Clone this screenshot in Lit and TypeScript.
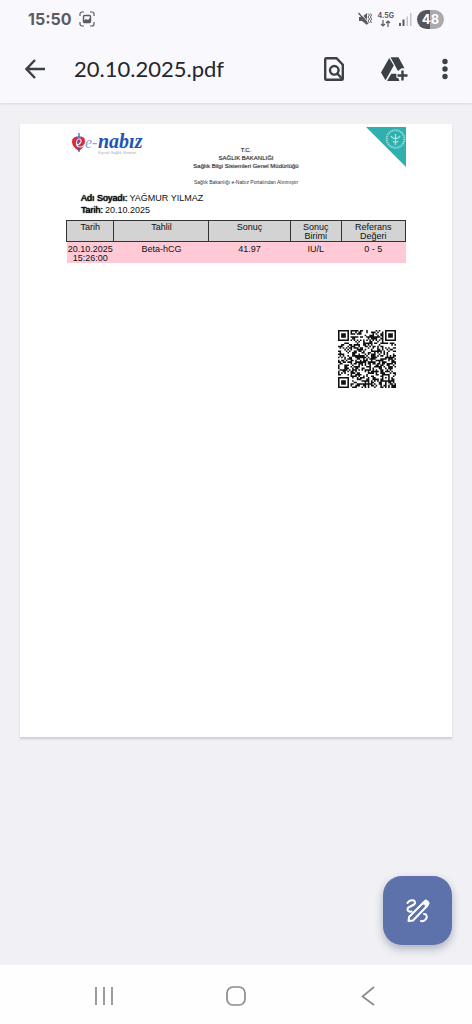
import { LitElement, html, css, svg } from "lit";
import { customElement } from "lit/decorators.js";

const QR_SIZE = 37;

/** Builds the module path of the verification code at the foot of the report. */
function qrPath(): string {
  let seed = 20102025;
  const next = () => {
    seed = (seed * 1103515245 + 12345) % 2147483648;
    return seed / 2147483648;
  };
  const ring = (r: number, c: number, r0: number, c0: number, n: number) => {
    const y = r - r0;
    const x = c - c0;
    const d = Math.min(y, x, n - 1 - y, n - 1 - x);
    return d !== 1;
  };
  let d = "";
  for (let r = 0; r < QR_SIZE; r++) {
    for (let c = 0; c < QR_SIZE; c++) {
      const noise = next() < 0.52;
      const far = QR_SIZE - 8;
      let on = noise;
      if (r < 8 && c < 8) on = r < 7 && c < 7 && ring(r, c, 0, 0, 7);
      else if (r < 8 && c >= far) on = r < 7 && c > far && ring(r, c, 0, far + 1, 7);
      else if (r >= far && c < 8) on = r > far && c < 7 && ring(r, c, far + 1, 0, 7);
      else if (r >= 28 && r < 33 && c >= 28 && c < 33) on = ring(r, c, 28, 28, 5);
      else if (r === 6 || c === 6) on = (r + c) % 2 === 0;
      if (on) d += `M${c} ${r}h1v1h-1z`;
    }
  }
  return d;
}

const QR = qrPath();

@customElement("status-bar")
class StatusBar extends LitElement {
  static styles = css`
    :host {
      display: flex;
      align-items: center;
      justify-content: space-between;
      height: 38px;
      padding: 0 28px;
      color: #5b5b62;
      font-family: Inter, Roboto, sans-serif;
    }
    .side { display: flex; align-items: center; }
    .left { gap: 8px; }
    .right { gap: 5px; }
    .time { font-size: 16px; font-weight: 700; line-height: 20px; }
    .net {
      display: flex;
      flex-direction: column;
      align-items: center;
      font-size: 7px;
      font-weight: 700;
      line-height: 8px;
    }
    .battery {
      width: 27px;
      height: 19px;
      border-radius: 10px;
      background: linear-gradient(90deg, #55555a 48%, #a9a9ae 48%);
      color: #fff;
      font-size: 13px;
      font-weight: 700;
      line-height: 19px;
      text-align: center;
    }
    svg { display: block; }
  `;

  render() {
    return html`
      <div class="side left">
        <span class="time">15:50</span>
        <svg width="16" height="16" viewBox="0 0 16 16" fill="none" stroke="currentColor">
          <path d="M1 5V3a2 2 0 0 1 2-2h2M11 1h2a2 2 0 0 1 2 2v2M15 11v2a2 2 0 0 1-2 2h-2M5 15H3a2 2 0 0 1-2-2v-2" stroke-width="1.2" />
          <rect x="4.5" y="4.5" width="7" height="7" rx="1" stroke-width="1.4" />
          <path d="M5 11V9.500l2-1.500 2 1 2-2v4z" fill="currentColor" stroke="none" />
        </svg>
      </div>
      <div class="side right">
        <svg width="14" height="14" viewBox="0 0 14 14" fill="none" stroke="currentColor">
          <path d="M1 5h3l5-4v12L4 9H1z" fill="currentColor" stroke="none" />
          <path d="M1.500 0l9.500 11" stroke="#f8f8fd" stroke-width="1" />
          <path d="M.5 1l9.500 11" stroke-width="1.300" />
          <path d="M10 1.500l1.500 1.500-1.500 2 1.500 2-1.500 2 1.500 2M12.500 1.500L13.500 3l-1 2 1 2-1 2 1 2" />
        </svg>
        <span class="net">
          <span>4.5G</span>
          <svg width="11" height="7" viewBox="0 0 11 7" fill="none" stroke="currentColor" stroke-width="1.200">
            <path d="M3 0v6M1 4l2 2 2-2M8 7V1M6 3l2-2 2 2" />
          </svg>
        </span>
        <svg width="13" height="13" viewBox="0 0 13 13">
          <path d="M0 10h2v3H0zM3.500 6.500h2V13h-2z" fill="#5b5b62" />
          <path d="M7.500 3.500h1.500V13H7.500zM11 0h1.500v13H11z" fill="#c3c3c8" />
        </svg>
        <span class="battery">48</span>
      </div>
    `;
  }
}

@customElement("viewer-toolbar")
class ViewerToolbar extends LitElement {
  static styles = css`
    :host {
      display: flex;
      align-items: center;
      box-sizing: border-box;
      height: 64px;
      padding: 0 6px 2px 20px;
      color: #3c4047;
    }
    button {
      display: grid;
      place-items: center;
      height: 48px;
      padding: 0;
      border: 0;
      background: none;
      color: inherit;
    }
    .back { width: 30px; }
    .tool { width: 60px; }
    .more { width: 42px; }
    h1 {
      flex: 1;
      margin: 0 0 0 24px;
      color: #25262b;
      font: 400 22px/28px Lato, Roboto, sans-serif;
    }
    svg { display: block; }
  `;

  render() {
    return html`
      <button class="back" aria-label="Geri">
        <svg width="20" height="20" viewBox="0 0 20 20" fill="none" stroke="currentColor" stroke-width="2.400">
          <path d="M20 10H1.500M10 1L1.500 10l8.500 9" />
        </svg>
      </button>
      <h1>20.10.2025.pdf</h1>
      <button class="tool" aria-label="Bul">
        <svg width="22" height="26" viewBox="0 0 22 26" fill="none" stroke="currentColor" stroke-width="2.400">
          <path d="M3.200 2.200h10.300l6.300 6.500v14.100a1 1 0 0 1-1 1H3.200a1 1 0 0 1-1-1V3.200a1 1 0 0 1 1-1z" />
          <circle cx="11.300" cy="14.300" r="4.300" />
          <path d="M14.300 17.500l5 5.500" />
        </svg>
      </button>
      <button class="tool" aria-label="Drive'a ekle">
        <svg width="27" height="25" viewBox="0 0 27 25" fill="currentColor">
          <path d="M0 15.500L8.200 1l4.600 7.500-8.300 14.700zM9.500.300h8l6 10.900h-3l-3.500 2.800zM6 24l4.300-7.300h5.200v3.800h1.500L18.500 24z" />
          <path d="M21 13.200v10.600M15.700 18.500h10.600" stroke="#f8f8fd" stroke-width="5" />
          <path d="M21.500 13.500v10M16.500 18.500h10" stroke="currentColor" stroke-width="2.400" />
        </svg>
      </button>
      <button class="more" aria-label="Diğer seçenekler">
        <svg width="6" height="22" viewBox="0 0 6 22" fill="currentColor">
          <circle cx="3" cy="3.500" r="2.700" /><circle cx="3" cy="11" r="2.700" /><circle cx="3" cy="18.500" r="2.700" />
        </svg>
      </button>
    `;
  }
}

@customElement("report-sheet")
class ReportSheet extends LitElement {
  static styles = css`
    :host {
      display: flex;
      flex-direction: column;
      box-sizing: border-box;
      aspect-ratio: 432 / 613;
      padding: 3px 46px;
      background: #fff;
      box-shadow: 0 2px 2px #cdcdd2;
      color: #111;
      font: 9px/9px "Liberation Sans", Arial, sans-serif;
    }
    header {
      display: grid;
      grid-template-columns: 80px 1fr 60px;
      height: 65px;
    }
    .logo { margin: 0 0 0 5px; }
    .flag { justify-self: end; }
    svg { display: block; }
    .office {
      padding-top: 19px;
      color: #333;
      font-size: 6px;
      line-height: 8px;
      text-align: center;
      white-space: nowrap;
    }
    .office p { margin: 0; }
    .office .unit { text-shadow: 0 0 1px #777; }
    .office .source { margin-top: 8px; font-size: 5px; color: #333; }
    .person { margin: 0 0 0 15px; line-height: 12px; }
    .person div { display: flex; gap: 2px; }
    .person dt { text-shadow: 0 0 1px #111, 0 0 1px #111; }
    .person dd { margin: 0; }
    table {
      width: 100%;
      margin-top: 4px;
      border-collapse: collapse;
      table-layout: fixed;
      text-align: center;
    }
    th, td { padding: 0; font-weight: 400; vertical-align: top; }
    th {
      padding-top: 2px;
      border: 1px solid #333;
      background: #d3d3d3;
      line-height: 9px;
    }
    td { padding: 3px 0 0; background: #ffcad5; }
    .c-date { width: 14%; }
    .c-test { width: 28%; }
    .c-result { width: 24%; }
    .c-unit { width: 15%; }
    .c-range { width: 19%; }
    .qr { align-self: flex-end; margin: 67px 10px 0 0; }
  `;

  render() {
    return html`
      <header>
        <svg class="logo" width="80" height="30" viewBox="0 -5 80 30" role="img" aria-label="e-nabız">
          <path d="M8 19C3 16 1 13 1 9.500 1 5 6 3.500 8 7c2-3.500 6-2.500 6 2 0 4-2 7-6 10z" fill="#d92b3a" />
          <path d="M8 1v19M5 5h6" stroke="#4257ad" stroke-width="1.200" />
          <path d="M5 13c5 0 7-6 3-6-3 0-4 8 1 8 3 0 4-1 5-3" fill="none" stroke="#dfe6fa" stroke-width="1.200" />
          <text x="14" y="16" font-family="Liberation Serif, serif" font-size="16" font-style="italic" fill="#8ea7d8">e-</text>
          <text x="27" y="16" font-family="Liberation Serif, serif" font-size="20" font-style="italic" font-weight="700" fill="#2453b5">nabız</text>
          <text x="27" y="22" font-family="Liberation Sans, sans-serif" font-size="4" fill="#a3acb8">Kişisel Sağlık Sistemi</text>
        </svg>
        <div class="office">
          <p class="unit">T.C.</p>
          <p class="unit">SAĞLIK BAKANLIĞI</p>
          <p class="unit">Sağlık Bilgi Sistemleri Genel Müdürlüğü</p>
          <p class="source">Sağlık Bakanlığı e-Nabız Portalından Alınmıştır</p>
        </div>
        <svg class="flag" width="40" height="40" viewBox="0 0 40 40" aria-hidden="true">
          <path d="M0 0h40v40z" fill="#2fb0ae" />
          <g fill="none" stroke="#b5e6e3">
            <circle cx="29.500" cy="12" r="8.800" stroke-width="2" stroke-dasharray="1.300 .8" opacity=".8" />
            <path d="M29.500 7v11M25 9c1 2 3 2.500 4.500 2.500S33 11 34 9M27 14c1 2 4 2 5 0" stroke-width="1.200" />
          </g>
        </svg>
      </header>
      <dl class="person">
        <div><dt>Adı Soyadı:</dt><dd>YAĞMUR YILMAZ</dd></div>
        <div><dt>Tarih:</dt><dd>20.10.2025</dd></div>
      </dl>
      <table>
        <colgroup>
          <col class="c-date" /><col class="c-test" /><col class="c-result" /><col class="c-unit" /><col class="c-range" />
        </colgroup>
        <thead>
          <tr><th>Tarih</th><th>Tahlil</th><th>Sonuç</th><th>Sonuç<br />Birimi</th><th>Referans<br />Değeri</th></tr>
        </thead>
        <tbody>
          <tr><td>20.10.2025<br />15:26:00</td><td>Beta-hCG</td><td>41.97</td><td>IU/L</td><td>0 - 5</td></tr>
        </tbody>
      </table>
      <svg class="qr" width="58" height="58" viewBox="0 0 37 37" role="img" aria-label="QR">
        ${svg`<path d=${QR} fill="#111" />`}
      </svg>
    `;
  }
}

@customElement("app-root")
class AppRoot extends LitElement {
  static styles = css`
    :host {
      display: flex;
      flex-direction: column;
      min-height: 100vh;
      background: #f0f0f5;
    }
    .top {
      padding-bottom: 1px;
      background: #f8f8fd;
      box-shadow: 0 1px 2px #d9d9de;
    }
    main {
      position: relative;
      flex: 1;
      padding: 21px 20px;
    }
    .edit {
      position: absolute;
      right: 20px;
      bottom: 20px;
      display: grid;
      place-items: center;
      width: 69px;
      height: 69px;
      padding: 0;
      border: 0;
      border-radius: 19px;
      background: #5d71ab;
      box-shadow: 0 4px 9px #aeb2bd;
    }
    nav {
      display: grid;
      grid-template-columns: repeat(3, 132px);
      justify-content: center;
      height: 59px;
      background: #fefefe;
      color: #8b8b8b;
    }
    nav button {
      display: grid;
      place-items: center;
      padding: 2px 0 0;
      border: 0;
      background: none;
      color: inherit;
    }
    svg { display: block; }
  `;

  render() {
    return html`
      <div class="top">
        <status-bar></status-bar>
        <viewer-toolbar></viewer-toolbar>
      </div>
      <main>
        <report-sheet></report-sheet>
        <button class="edit" aria-label="Düzenle">
          <svg width="26" height="26" viewBox="0 0 26 26" fill="none" stroke="#fff" stroke-width="2" stroke-linecap="round">
            <path d="M2.500 5C5 1 10.500 1.500 10 5c-.5 3-7 3-7.500 6-.3 2 1.500 3 4 2.500" />
            <path d="M19 16c3 0 3.300 3 2 5-1 1.500-3 2.500-5 2" />
            <path d="M3.500 23l.5-4L19 4l3.500 3.500L8 22.500z" stroke-linejoin="round" />
            <path d="M17.500 4.500L20 2.200c1.500-1 5 2 3.800 4L21.500 8.500z" fill="#fff" stroke-width="1" />
          </svg>
        </button>
      </main>
      <nav>
        <button aria-label="Son uygulamalar">
          <svg width="20" height="20" viewBox="0 0 20 20" stroke="currentColor" stroke-width="1.700">
            <path d="M2 1v18M10 1v18M18 1v18" />
          </svg>
        </button>
        <button aria-label="Ana ekran">
          <svg width="20" height="20" viewBox="0 0 20 20" fill="none" stroke="currentColor" stroke-width="1.700">
            <rect x="1" y="1" width="18" height="18" rx="6" />
          </svg>
        </button>
        <button aria-label="Geri">
          <svg width="20" height="20" viewBox="0 0 20 20" fill="none" stroke="currentColor" stroke-width="1.700">
            <path d="M16 1L4.500 10.500 16 19" />
          </svg>
        </button>
      </nav>
    `;
  }
}
